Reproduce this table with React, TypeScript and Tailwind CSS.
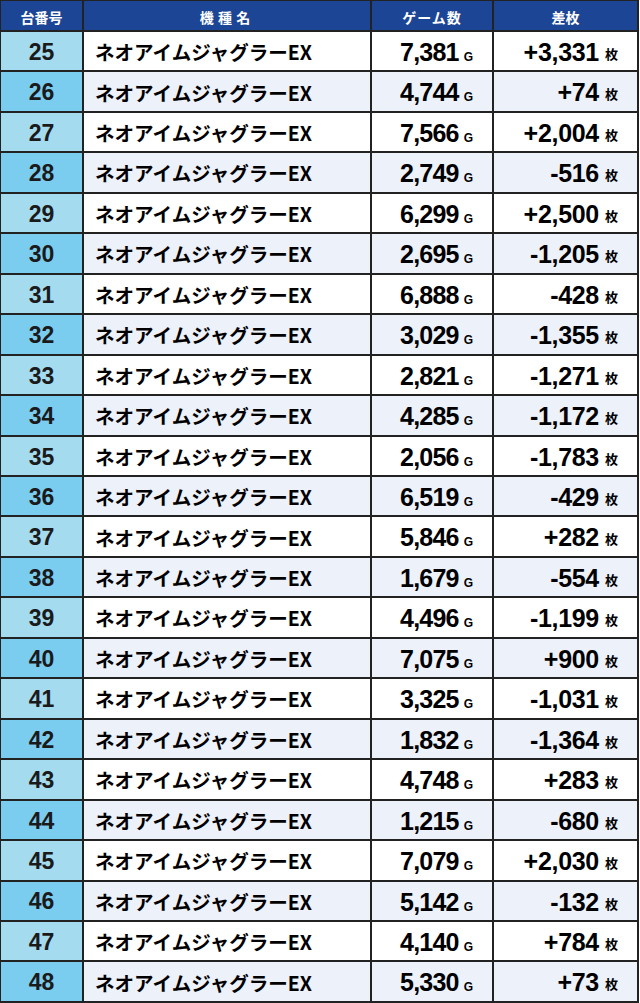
import React from "react";

const rows: [number, string, string][] = [
  [25, "7,381", "+3,331"],
  [26, "4,744", "+74"],
  [27, "7,566", "+2,004"],
  [28, "2,749", "-516"],
  [29, "6,299", "+2,500"],
  [30, "2,695", "-1,205"],
  [31, "6,888", "-428"],
  [32, "3,029", "-1,355"],
  [33, "2,821", "-1,271"],
  [34, "4,285", "-1,172"],
  [35, "2,056", "-1,783"],
  [36, "6,519", "-429"],
  [37, "5,846", "+282"],
  [38, "1,679", "-554"],
  [39, "4,496", "-1,199"],
  [40, "7,075", "+900"],
  [41, "3,325", "-1,031"],
  [42, "1,832", "-1,364"],
  [43, "4,748", "+283"],
  [44, "1,215", "-680"],
  [45, "7,079", "+2,030"],
  [46, "5,142", "-132"],
  [47, "4,140", "+784"],
  [48, "5,330", "+73"],
];

const jp = { fontFamily: '"Noto Sans CJK JP", sans-serif' };
const num = { fontFamily: '"Liberation Sans", "Noto Sans CJK JP", sans-serif' };

export default function App() {
  return (
    <div className="w-[640px] h-[1003px] bg-white">
      <div className="w-[639px] h-[1003px] flex flex-col border-t border-l border-[#222]">
        <div
          className="h-[31px] flex bg-[#1d4596] text-white text-[14px] font-bold border-b-2 border-[#222]"
          style={jp}
        >
          <div className="w-[83px] flex items-center justify-center border-r-2 border-[#222] pt-[3px]">台番号</div>
          <div className="w-[288px] flex items-center justify-center border-r-2 border-[#222] pt-[3px] tracking-[0.3em] pl-[0.3em] pr-[4px]">機種名</div>
          <div className="w-[122px] flex items-center justify-center border-r-2 border-[#222] pt-[3px] tracking-[1px]">ゲーム数</div>
          <div className="flex-1 flex items-center justify-center border-r-2 border-[#222] pt-[3px]">差枚</div>
        </div>
        {rows.map(([no, games, diff], i) => {
          const odd = i % 2 === 0;
          return (
            <div
              key={no}
              className={`flex-1 flex border-b-2 border-[#222] ${odd ? "bg-white" : "bg-[#edf1fa]"}`}
            >
              <div
                className={`w-[83px] flex items-center justify-center border-r-2 border-[#222] pt-[2px] text-[23px] font-bold text-[#1a1a1a] ${odd ? "bg-[#a5dbef]" : "bg-[#7bcdf0]"}`}
                style={num}
              >
                {no}
              </div>
              <div
                className="w-[288px] flex items-center pl-[11px] pt-[1px] border-r-2 border-[#222] text-[19.5px] font-bold text-black"
                style={jp}
              >
                ネオアイムジャグラーEX
              </div>
              <div className="w-[122px] flex items-baseline justify-end pr-[19px] pt-[8px] border-r-2 border-[#222] gap-[5px]">
                <span className="text-[25px] font-bold text-black leading-none tracking-[-0.8px]" style={num}>
                  {games}
                </span>
                <span className="text-[12px] font-bold text-black leading-none" style={num}>
                  G
                </span>
              </div>
              <div className="flex-1 flex items-baseline justify-end pr-[19px] pt-[8px] border-r-2 border-[#222] gap-[6px]">
                <span className="text-[25px] font-bold text-black leading-none tracking-[-0.3px]" style={num}>
                  {diff}
                </span>
                <span className="text-[13px] font-bold text-black leading-none -translate-y-[2px]" style={jp}>
                  枚
                </span>
              </div>
            </div>
          );
        })}
      </div>
    </div>
  );
}
